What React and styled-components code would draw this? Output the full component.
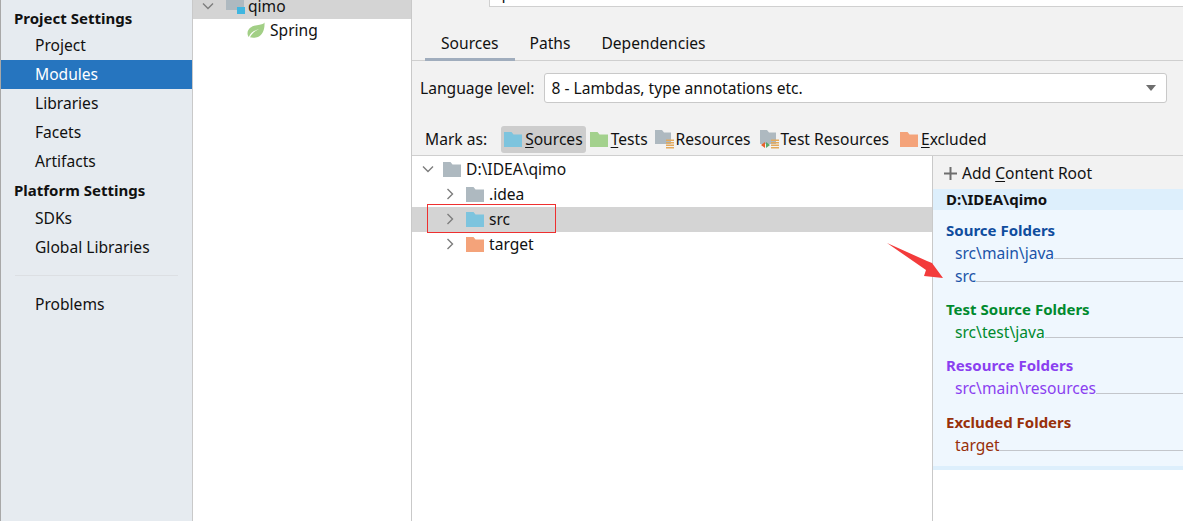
import styled, { createGlobalStyle } from 'styled-components';

const GlobalStyle = createGlobalStyle`
  html, body {
    margin: 0;
    padding: 0;
    height: 100%;
    overflow: hidden;
    background: #fff;
  }
  #root { height: 100%; }
`;

const Page = styled.div`
  position: relative;
  width: 1183px;
  height: 521px;
  display: flex;
  overflow: hidden;
  font-family: "Noto Sans", "Open Sans", sans-serif;
  font-size: 15.6px;
  color: #111;
`;

/* left settings list */
const Sidebar = styled.div`
  width: 191px;
  flex: none;
  background: #e6ebf0;
  border-left: 1px solid #a8a8a8;
  border-right: 1px solid #c9c9c9;
  padding-top: 7px;
`;

const SideTitle = styled.div`
  height: ${(p) => p.$h}px;
  line-height: ${(p) => p.$lh}px;
  padding-left: 13px;
  font-size: 15px;
  font-weight: 700;
`;

const SideItem = styled.div`
  height: 29px;
  line-height: 29px;
  padding-left: 34px;
  background: ${(p) => (p.$active ? '#2675bf' : 'transparent')};
  color: ${(p) => (p.$active ? '#fff' : '#111')};
`;

const SideRule = styled.div`
  height: 1px;
  margin: 13px 14px 14px;
  background: #dcdfe3;
`;

/* module tree */
const ModuleTree = styled.div`
  width: 218px;
  flex: none;
  background: #fff;
  border-right: 1px solid #c9c9c9;
  margin-top: -8px;
`;

const ModuleRow = styled.div`
  height: ${(p) => p.$h}px;
  display: flex;
  align-items: center;
  padding-left: ${(p) => p.$indent}px;
  gap: ${(p) => p.$gap}px;
  background: ${(p) => (p.$selected ? '#d4d4d4' : 'transparent')};
`;

const Twisty = styled.span`
  width: ${(p) => p.$w}px;
  flex: none;
  display: flex;
  align-items: center;
`;

/* module editor */
const Editor = styled.div`
  flex: 1;
  min-width: 0;
  display: flex;
  flex-direction: column;
  background: #f2f2f2;
`;

const NameBar = styled.div`
  height: 6px;
  margin-left: 77px;
  padding-left: 6px;
  background: #fff;
  border-bottom: 1px solid #d0d0d0;
  border-left: 1px solid #d0d0d0;
  flex: none;
  overflow: hidden;
`;

const NameText = styled.div`
  line-height: 20px;
  margin-top: -17px;
`;

const Tabs = styled.div`
  height: 54px;
  flex: none;
  display: flex;
  align-items: flex-end;
  padding-left: 13px;
  border-bottom: 1px solid #cfcfcf;
  box-sizing: border-box;
`;

const Tab = styled.div`
  height: 30px;
  line-height: 25px;
  padding: 0 ${(p) => p.$pad}px;
  margin-bottom: -1px;
  box-sizing: border-box;
  border-bottom: 3px solid ${(p) => (p.$active ? '#a0adbd' : 'transparent')};
`;

const LevelRow = styled.div`
  height: 30px;
  margin-top: 12px;
  flex: none;
  display: flex;
  align-items: center;
  padding: 0 16px 0 8px;
  gap: 10px;
`;

const Select = styled.div`
  flex: 1;
  height: 30px;
  box-sizing: border-box;
  background: #fff;
  border: 1px solid #c9c9c9;
  border-radius: 3px;
  display: flex;
  align-items: center;
  justify-content: space-between;
  padding: 0 10px 0 6px;
`;

const Caret = styled.span`
  width: 0;
  height: 0;
  border-left: 5px solid transparent;
  border-right: 5px solid transparent;
  border-top: 6px solid #6e6e6e;
`;

const MarkRow = styled.div`
  height: 30px;
  margin-top: 21px;
  padding: 0 0 1px 13px;
  box-sizing: content-box;
  flex: none;
  display: flex;
  align-items: center;
  border-bottom: 1px solid #cfcfcf;
`;

const MarkLabel = styled.span`
  margin-right: 14px;
`;

const MarkButton = styled.div`
  height: 27px;
  display: flex;
  align-items: center;
  gap: ${(p) => p.$gap}px;
  padding: 0 3px;
  margin-right: ${(p) => p.$mr ?? 0}px;
  border-radius: 3px;
  background: ${(p) => (p.$active ? '#cdcdcd' : 'transparent')};
`;

const Key = styled.span`
  text-decoration: underline;
  text-underline-offset: 2px;
`;

const Split = styled.div`
  flex: 1;
  display: flex;
  min-height: 0;
`;

const FileTree = styled.div`
  width: 520px;
  flex: none;
  background: #fff;
  padding-top: 1px;
  border-right: 1px solid #c9c9c9;
`;

const TreeRow = styled.div`
  height: 25px;
  box-sizing: border-box;
  padding-bottom: 1px;
  padding-left: ${(p) => p.$indent}px;
  display: flex;
  align-items: center;
  background: ${(p) => (p.$selected ? '#d4d4d4' : 'transparent')};
`;

const TreeLabel = styled.span`
  margin-left: 5px;
`;

const Roots = styled.div`
  flex: 1;
  min-width: 0;
  background: #fff;
`;

const AddRoot = styled.div`
  height: 33px;
  box-sizing: border-box;
  padding: 1px 0 0 11px;
  background: #f2f2f2;
  display: flex;
  align-items: center;
  gap: 5px;
`;

const RootHead = styled.div`
  height: 21px;
  line-height: 21px;
  padding-left: 13px;
  background: #ddeffc;
  font-size: 15px;
  font-weight: 700;
`;

const RootBody = styled.div`
  height: 260px;
  box-sizing: border-box;
  background: #eff7fe;
  border-bottom: 4px solid #ddeffc;
  padding-top: 9px;
`;

const GroupTitle = styled.div`
  height: 23px;
  line-height: 23px;
  margin-top: ${(p) => p.$top ?? 0}px;
  padding-left: 13px;
  font-size: 15px;
  font-weight: 700;
  color: ${(p) => p.$color};
`;

const FolderRow = styled.div`
  height: 23px;
  line-height: 23px;
  display: flex;
  padding-left: 22px;
  color: ${(p) => p.$color};
`;

const Leader = styled.span`
  flex: 1;
  height: 16px;
  border-bottom: 1px solid #c3c6cb;
`;

/* annotations pasted on top of the screenshot */
const RedBox = styled.div`
  position: absolute;
  left: 427px;
  top: 204px;
  width: 127px;
  height: 27px;
  border: 1px solid #ee2f2f;
`;

const Arrow = styled.svg`
  position: absolute;
  left: 885px;
  top: 240px;
`;

const Chevron = ({ open }) => (
  <svg width="12" height="12" viewBox="0 0 12 12" fill="none" stroke="#7d7d7d" strokeWidth="1.4">
    <path d={open ? 'M1 3.5 6 8.5 11 3.5' : 'M3.5 1 8.5 6 3.5 11'} />
  </svg>
);

const Folder = ({ color }) => (
  <svg width="18" height="15" viewBox="0 0 18 15">
    <path d="M0 0H7.5L9.5 2.5H18V15H0Z" fill={color} />
  </svg>
);

const ResourceFolder = ({ test }) => (
  <svg width="19" height="19" viewBox="0 0 19 19">
    <path d="M0 0H7L9 2.5H16V14H0Z" fill="#aeb9c0" />
    <path d="M11 9.5H19V11H11ZM11 12H19V13.5H11ZM11 14.5H19V16H11ZM11 17H19V18.5H11Z" fill="#e3a95c" />
    {test && <path d="M5 12V18L1 15Z" fill="#e8622c" />}
    {test && <path d="M6 12V18L10 15Z" fill="#59a869" />}
  </svg>
);

const ModuleIcon = () => (
  <svg width="19" height="16" viewBox="0 0 19 16">
    <path d="M0 0H7L9 2H18V12H0Z" fill="#aeb9c0" />
    <rect x="11" y="9" width="8" height="7" fill="#40b6e0" />
  </svg>
);

const Leaf = () => (
  <svg width="18" height="16" viewBox="0 0 18 16">
    <path d="M17.5 .5C16 2.500 14 2.600 10 3.200 4.500 4 .5 7 .5 11.500.5 12.500 1 14 1.800 15 3.500 11 7 8.500 12 7 8 9 4.500 11.500 3 15.300 5 16 8 16 11 15 15 13.500 18 8 17.500.5Z" fill="#a2cf86" />
  </svg>
);

const Plus = () => (
  <svg width="13" height="13" viewBox="0 0 13 13">
    <path d="M5.500 0H7.500V5.500H13V7.500H7.500V13H5.500V7.500H0V5.500H5.500Z" fill="#6e6e6e" />
  </svg>
);

const App = () => (
  <Page>
    <GlobalStyle />
    <Sidebar>
      <SideTitle $h={24} $lh={22}>Project Settings</SideTitle>
      <SideItem>Project</SideItem>
      <SideItem $active>Modules</SideItem>
      <SideItem>Libraries</SideItem>
      <SideItem>Facets</SideItem>
      <SideItem>Artifacts</SideItem>
      <SideTitle $h={28} $lh={28}>Platform Settings</SideTitle>
      <SideItem>SDKs</SideItem>
      <SideItem>Global Libraries</SideItem>
      <SideRule />
      <SideItem>Problems</SideItem>
    </Sidebar>

    <ModuleTree>
      <ModuleRow $selected $h={27} $indent={9} $gap={3}>
        <Twisty $w={21}><Chevron open /></Twisty>
        <ModuleIcon />
        <span>qimo</span>
      </ModuleRow>
      <ModuleRow $h={22} $indent={54} $gap={5}>
        <Leaf />
        <span>Spring</span>
      </ModuleRow>
    </ModuleTree>

    <Editor>
      <NameBar><NameText>qimo</NameText></NameBar>
      <Tabs>
        <Tab $active $pad={16}>Sources</Tab>
        <Tab $pad={15}>Paths</Tab>
        <Tab $pad={16}>Dependencies</Tab>
      </Tabs>
      <LevelRow>
        <span>Language level:</span>
        <Select>
          <span>8 - Lambdas, type annotations etc.</span>
          <Caret />
        </Select>
      </LevelRow>
      <MarkRow>
        <MarkLabel>Mark as:</MarkLabel>
        <MarkButton $active $gap={3} $mr={1}>
          <Folder color="#7dc4de" />
          <span><Key>S</Key>ources</span>
        </MarkButton>
        <MarkButton $gap={3} $mr={1}>
          <Folder color="#a3d18d" />
          <span><Key>T</Key>ests</span>
        </MarkButton>
        <MarkButton $gap={2} $mr={3}>
          <ResourceFolder />
          <span>Resources</span>
        </MarkButton>
        <MarkButton $gap={2} $mr={5}>
          <ResourceFolder test />
          <span>Test Resources</span>
        </MarkButton>
        <MarkButton $gap={3}>
          <Folder color="#f4a37a" />
          <span><Key>E</Key>xcluded</span>
        </MarkButton>
      </MarkRow>
      <Split>
        <FileTree>
          <TreeRow $indent={10}>
            <Twisty $w={21}><Chevron open /></Twisty>
            <Folder color="#aeb9c0" />
            <TreeLabel>D:\IDEA\qimo</TreeLabel>
          </TreeRow>
          <TreeRow $indent={32}>
            <Twisty $w={22}><Chevron /></Twisty>
            <Folder color="#aeb9c0" />
            <TreeLabel>.idea</TreeLabel>
          </TreeRow>
          <TreeRow $indent={32} $selected>
            <Twisty $w={22}><Chevron /></Twisty>
            <Folder color="#7dc4de" />
            <TreeLabel>src</TreeLabel>
          </TreeRow>
          <TreeRow $indent={32}>
            <Twisty $w={22}><Chevron /></Twisty>
            <Folder color="#f4a37a" />
            <TreeLabel>target</TreeLabel>
          </TreeRow>
        </FileTree>
        <Roots>
          <AddRoot>
            <Plus />
            <span>Add <Key>C</Key>ontent Root</span>
          </AddRoot>
          <RootHead>D:\IDEA\qimo</RootHead>
          <RootBody>
            <GroupTitle $color="#0f4d9e">Source Folders</GroupTitle>
            <FolderRow $color="#1b54a8">src\main\java<Leader /></FolderRow>
            <FolderRow $color="#1b54a8">src<Leader /></FolderRow>
            <GroupTitle $color="#008a2e" $top={10}>Test Source Folders</GroupTitle>
            <FolderRow $color="#008a2e">src\test\java<Leader /></FolderRow>
            <GroupTitle $color="#8a3ff0" $top={10}>Resource Folders</GroupTitle>
            <FolderRow $color="#8a3ff0">src\main\resources<Leader /></FolderRow>
            <GroupTitle $color="#98300a" $top={11}>Excluded Folders</GroupTitle>
            <FolderRow $color="#98300a">target<Leader /></FolderRow>
          </RootBody>
        </Roots>
      </Split>
    </Editor>

    <RedBox />
    <Arrow width="62" height="42" viewBox="0 0 62 42">
      <path d="M2 3 L42 21 L47 23 L58 38 L39 36 L41 30 Z" fill="#f33b3b" />
    </Arrow>
  </Page>
);

export default App;
